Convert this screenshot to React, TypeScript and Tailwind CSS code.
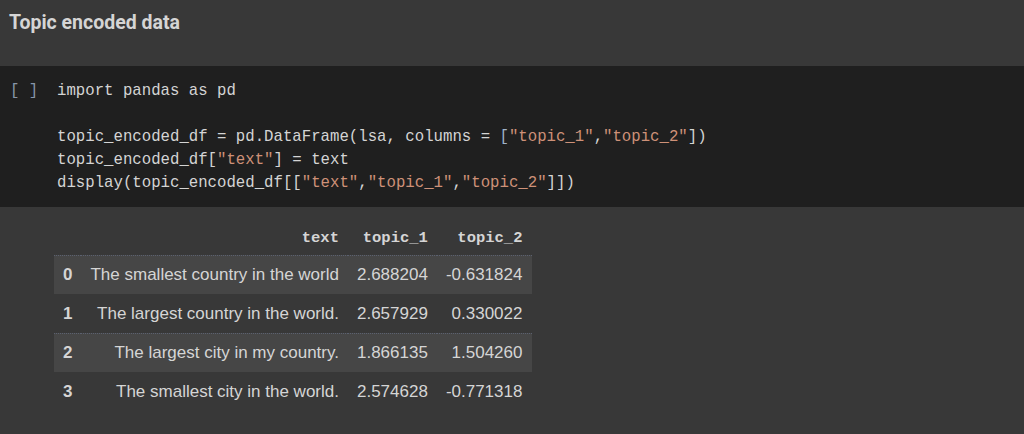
import React from "react";

const S = ({ children }: { children: React.ReactNode }) => (
  <span className="text-[#ce9178]">{children}</span>
);

const rows = [
  ["0", "The smallest country in the world", "2.688204", "-0.631824"],
  ["1", "The largest country in the world.", "2.657929", "0.330022"],
  ["2", "The largest city in my country.", "1.866135", "1.504260"],
  ["3", "The smallest city in the world.", "2.574628", "-0.771318"],
];

export default function App() {
  return (
    <div className="w-[1024px] h-[434px] bg-[#383838] overflow-hidden">
      <div className="h-[66px] pl-[9px] pt-[10px]">
        <h2
          className="text-[19.5px] font-bold text-[#d5d5d5] leading-[26px]"
          style={{ fontFamily: "Roboto, 'Liberation Sans', sans-serif" }}
        >
          Topic encoded data
        </h2>
      </div>
      <div
        className="h-[141px] bg-[#1f1f1f] flex pt-[14px] text-[15.7px] leading-[23px] text-[#d4d4d4]"
        style={{ fontFamily: "'Liberation Mono', 'DejaVu Sans Mono', monospace" }}
      >
        <div className="w-[57px] pl-[10px] text-[#8795a8] whitespace-pre">[ ]</div>
        <div className="whitespace-pre">
          <div>import pandas as pd</div>
          <div>&nbsp;</div>
          <div>
            topic_encoded_df = pd.DataFrame(lsa, columns = <span className="text-[#9fb3c8]">[</span>
            <S>"topic_1"</S>,<S>"topic_2"</S>])
          </div>
          <div>
            topic_encoded_df[<S>"text"</S>] = text
          </div>
          <div>
            display(topic_encoded_df[[<S>"text"</S>,<S>"topic_1"</S>,<S>"topic_2"</S>]])
          </div>
        </div>
      </div>
      <div className="pl-[54px] pt-[16px]">
        <table
          className="border-collapse text-[#d5d5d5]"
          style={{ fontFamily: "'Liberation Sans', Arial, sans-serif" }}
        >
          <thead>
            <tr
              className="h-[32px] text-[15.5px] font-bold"
              style={{ fontFamily: "'Liberation Mono', 'DejaVu Sans Mono', monospace" }}
            >
              <th className="w-[27px] px-[9px]"></th>
              <th className="px-[9px] text-right">text</th>
              <th className="px-[9px] text-right">topic_1</th>
              <th className="pl-[9px] pr-[10px] text-right">topic_2</th>
            </tr>
          </thead>
          <tbody className="text-[17px]">
            {rows.map((r, i) => (
              <tr
                key={r[0]}
                className={
                  i % 2 === 0
                    ? "h-[39px] bg-[#464646] border-t border-dotted border-[#5b6170]"
                    : "h-[39px]"
                }
              >
                <td className="px-[9px] font-bold">{r[0]}</td>
                <td className="px-[9px] text-right">{r[1]}</td>
                <td className="px-[9px] text-right">{r[2]}</td>
                <td className="pl-[9px] pr-[10px] text-right">{r[3]}</td>
              </tr>
            ))}
          </tbody>
        </table>
      </div>
    </div>
  );
}
